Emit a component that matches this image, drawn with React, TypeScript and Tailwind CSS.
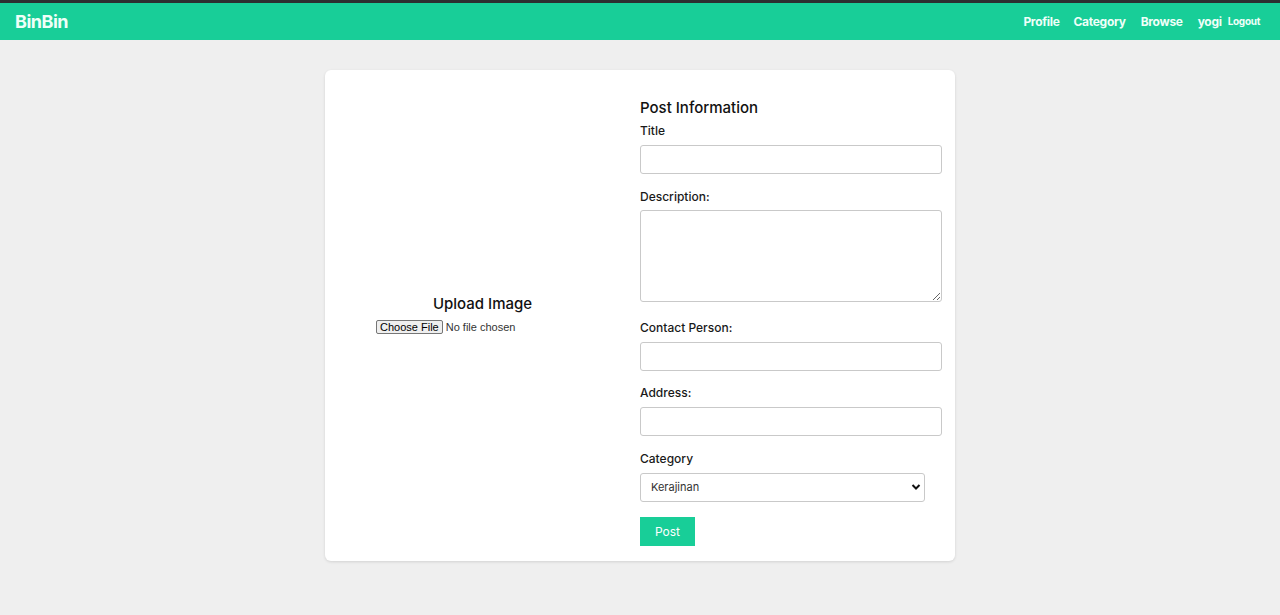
import React from "react";

export default function App() {
  const inputCls =
    "block w-[302px] h-[29px] rounded-[3px] border border-[#c9c9c9] bg-white px-2 text-[13px] outline-none";
  const labelCls = "block text-[12px] leading-[20px] font-medium text-[#1a1a1a] pt-[1px]";
  return (
    <div
      className="min-h-[615px] bg-[#efefef]"
      style={{ fontFamily: "Inter, 'Noto Sans', sans-serif" }}
    >
      <nav className="h-[40px] bg-[#18ce98] border-t-[3px] border-[#2c2f30] flex items-center justify-between pl-[15px] pr-[20px]">
        <div className="text-[18px] font-bold text-[#effff8] tracking-[-0.5px]">BinBin</div>
        <div className="flex items-center text-[12px] font-bold text-[#effff8] tracking-[-0.3px]">
          <span className="mr-[14px]">Profile</span>
          <span className="mr-[15px]">Category</span>
          <span className="mr-[15px]">Browse</span>
          <span className="mr-[6px]">yogi</span>
          <span className="text-[10px]">Logout</span>
        </div>
      </nav>
      <div className="flex justify-center pt-[30px]">
        <div className="w-[630px] h-[491px] bg-white rounded-[6px] shadow-[0_1px_3px_rgba(0,0,0,0.12)] flex">
          <div className="w-[315px] flex flex-col justify-center pb-[4px]">
            <div className="text-center text-[15px] leading-5 font-medium text-[#111] mb-[3px]">
              Upload Image
            </div>
            <input
              type="file"
              className="mt-[3px] ml-[51px] text-[11px] leading-[14px] text-[#333] w-[220px] file:border file:border-solid file:border-[#767676] file:bg-[#efefef] file:rounded-[2px] file:px-[3px] file:py-0 file:mr-[3px] file:text-[11px] file:leading-[12px] file:text-black"
              style={{ fontFamily: "Arial, 'Liberation Sans', sans-serif" }}
            />
          </div>
          <div className="w-[315px] pt-[28px]">
            <div className="text-[15px] leading-5 font-medium text-[#111]">Post Information</div>
            <label className={labelCls + " mt-[2px]"}>Title</label>
            <input className={inputCls + " mt-[4px]"} />
            <label className={labelCls + " mt-[12px]"}>Description:</label>
            <textarea className="block w-[302px] h-[92px] mt-[3px] rounded-[3px] border border-[#c9c9c9] bg-white px-2 text-[13px] outline-none" />
            <label className={labelCls + " mt-[15px]"}>Contact Person:</label>
            <input className={inputCls + " mt-[4px]"} />
            <label className={labelCls + " mt-[11px]"}>Address:</label>
            <input className={inputCls + " mt-[4px]"} />
            <label className={labelCls + " mt-[12px]"}>Category</label>
            <div className="relative mt-[4px] w-[285px] h-[29px]">
              <select className="appearance-none w-full h-full rounded-[3px] border border-[#c9c9c9] bg-white pl-[10px] text-[11px] text-[#333] outline-none">
                <option>Kerajinan</option>
              </select>
              <svg
                className="absolute right-[4px] top-[10px] pointer-events-none"
                width="10"
                height="8"
                viewBox="0 0 10 8"
              >
                <path d="M1.5 2 L5 5.5 L8.5 2" stroke="#111" strokeWidth="2" fill="none" />
              </svg>
            </div>
            <button className="mt-[15px] w-[55px] h-[29px] bg-[#18ce98] text-white text-[12px]">
              Post
            </button>
          </div>
        </div>
      </div>
    </div>
  );
}
